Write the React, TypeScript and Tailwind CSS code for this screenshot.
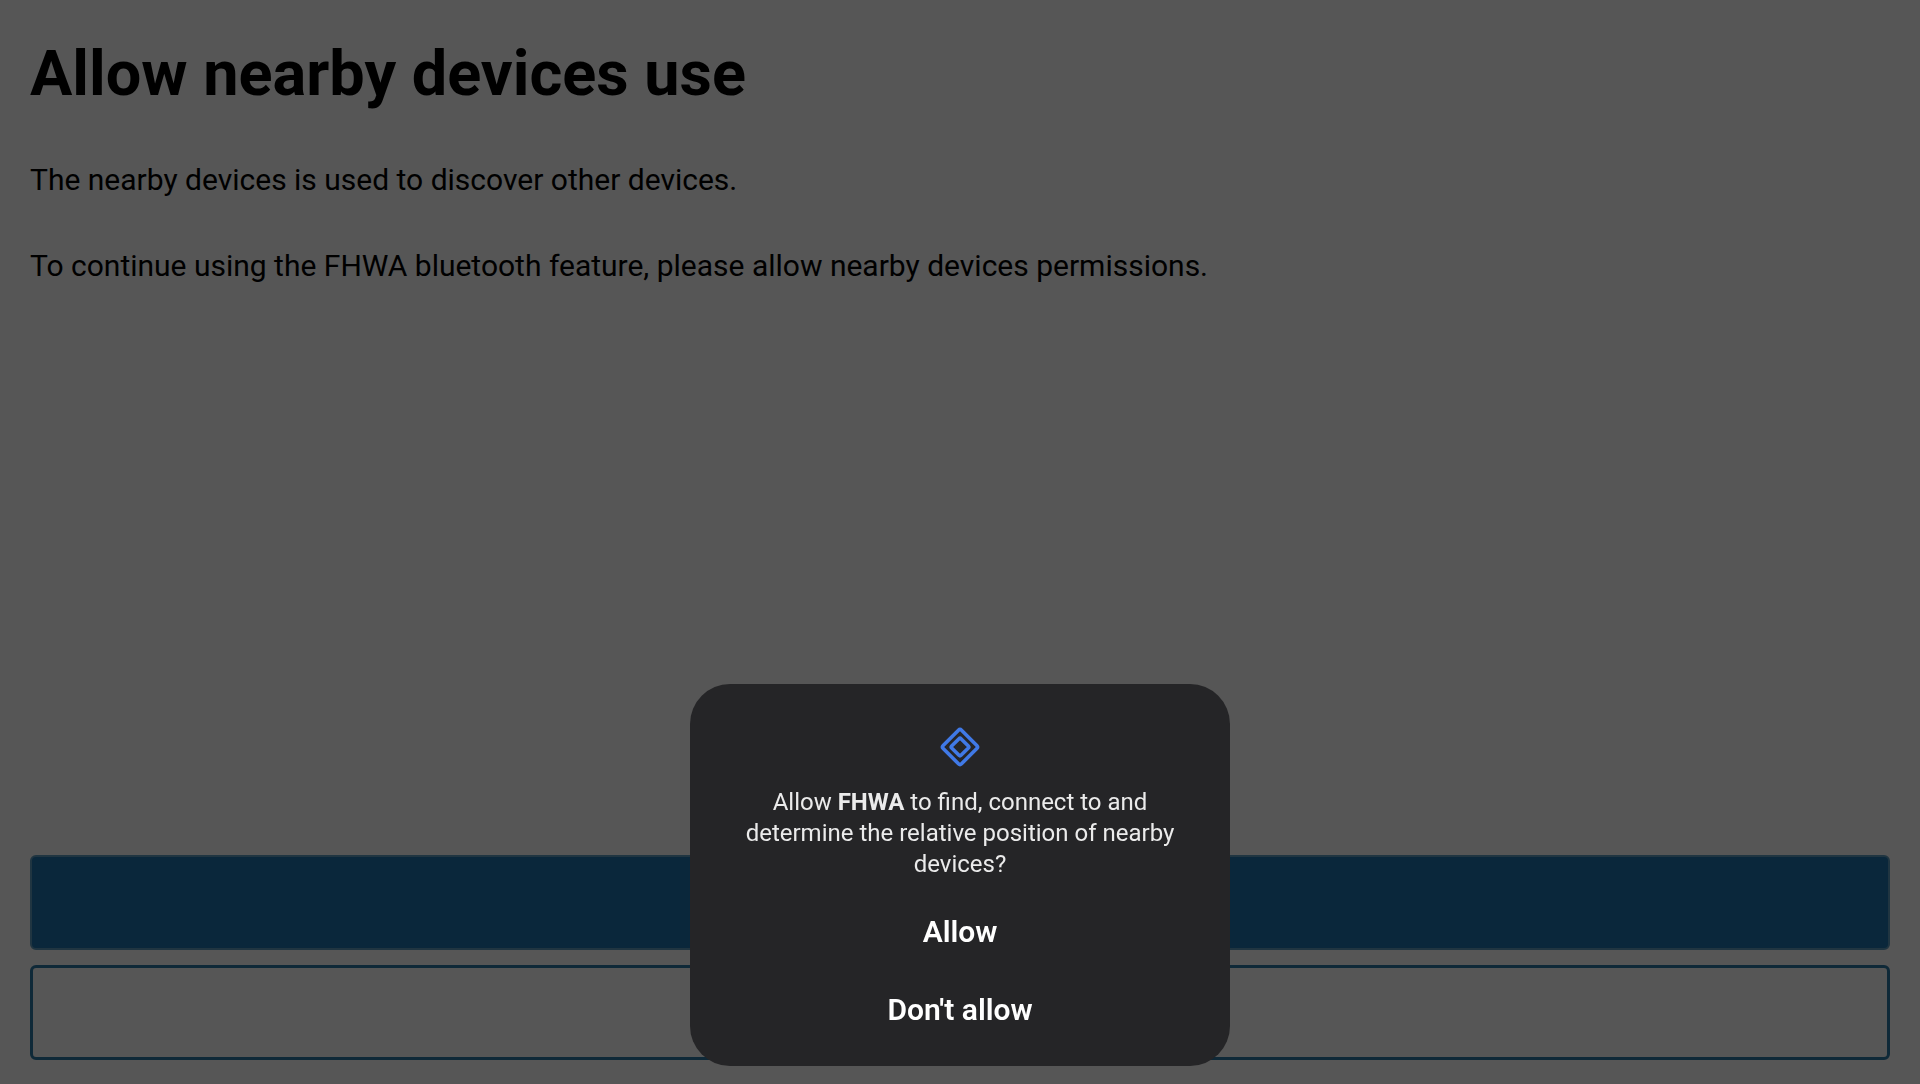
function NearbyIcon() {
  return (
    <svg aria-hidden="true" viewBox="0 0 48 48" className="size-12 text-[#4079e6]" fill="none" stroke="currentColor" strokeWidth="3.6">
      <rect x="11" y="11" width="26" height="26" rx="2.2" transform="rotate(45 24 24)" />
      <rect x="17.4" y="17.4" width="13.2" height="13.2" rx="1.4" transform="rotate(45 24 24)" />
    </svg>
  );
}

function PermissionDialog() {
  return (
    <div className="fixed inset-x-0 bottom-0 flex justify-center pb-[18px]">
      <section
        role="dialog"
        aria-modal="true"
        aria-labelledby="permission-message"
        className="flex w-[540px] max-w-full flex-col items-center rounded-[40px] bg-[#252527] pt-[39px] pb-[18px]"
      >
        <NearbyIcon />
        <p id="permission-message" className="mt-4 px-12 text-center text-[24px] leading-[31px] text-[#ebebeb]">
          Allow <strong className="font-bold">FHWA</strong> to find, connect to and determine the relative position of nearby devices?
        </p>
        <div className="mt-3 flex w-full flex-col">
          <button type="button" className="h-[78px] text-[30px] font-semibold text-white">
            Allow
          </button>
          <button type="button" className="h-[78px] text-[30px] font-semibold text-white">
            Don't allow
          </button>
        </div>
      </section>
    </div>
  );
}

export default function App() {
  return (
    <div className="flex min-h-screen flex-col bg-[#565656] px-[30px] pt-9 pb-6 font-['Roboto',sans-serif] text-black">
      <main className="flex-1">
        <h1 className="text-[63px] leading-[76px] font-bold">Allow nearby devices use</h1>
        <div className="mt-[50px] flex flex-col gap-[50px] text-[30px] leading-9">
          <p>The nearby devices is used to discover other devices.</p>
          <p>To continue using the FHWA bluetooth feature, please allow nearby devices permissions.</p>
        </div>
      </main>
      <div className="flex flex-col gap-[15px]">
        <button type="button" aria-label="Continue" className="h-[95px] w-full rounded-md border-2 border-[#203541] bg-[#0a273b]" />
        <button type="button" aria-label="Cancel" className="h-[95px] w-full rounded-md border-3 border-[#0f2938]" />
      </div>
      <PermissionDialog />
    </div>
  );
}
